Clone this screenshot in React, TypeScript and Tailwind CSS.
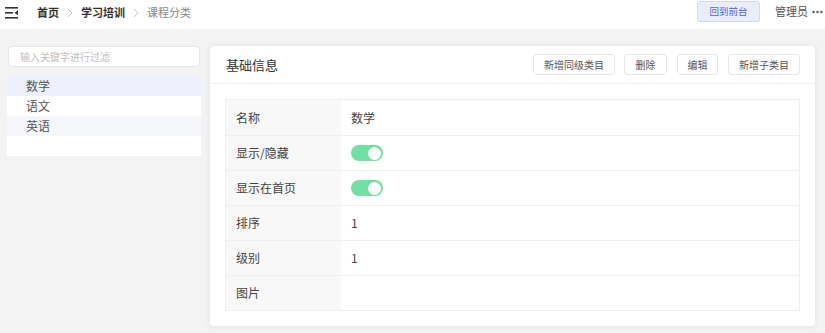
import React from "react";

const font = { fontFamily: '"Noto Sans CJK SC", "Noto Sans", sans-serif' };

function Toggle() {
  return (
    <div className="relative w-[32px] h-[16px] rounded-full bg-[#6fe0a1]">
      <div className="absolute right-[2px] top-[1.5px] w-[13px] h-[13px] rounded-full bg-white" />
    </div>
  );
}

function Chevron() {
  return (
    <svg width="6" height="10" viewBox="0 0 6 10" className="mx-[8px]">
      <path d="M1 1 L5 5 L1 9" fill="none" stroke="#c4c4c4" strokeWidth="1" />
    </svg>
  );
}

export default function App() {
  const rows: { label: string; value: React.ReactNode }[] = [
    { label: "名称", value: "数学" },
    { label: "显示/隐藏", value: <Toggle /> },
    { label: "显示在首页", value: <Toggle /> },
    { label: "排序", value: "1" },
    { label: "级别", value: "1" },
    { label: "图片", value: "" },
  ];
  return (
    <div className="w-[825px] h-[333px] bg-[#f3f3f3] overflow-hidden" style={font}>
      {/* header */}
      <div className="h-[29px] bg-white flex items-center">
        <svg width="14" height="12" viewBox="0 0 14 12" className="ml-[5px] mb-[3px]">
          <rect x="0" y="0" width="13" height="1.6" fill="#333" />
          <rect x="0" y="5" width="8" height="1.6" fill="#333" />
          <path d="M13 3.3 L9.5 5.8 L13 8.3 Z" fill="#333" />
          <rect x="0" y="10" width="13" height="1.6" fill="#333" />
        </svg>
        <div className="flex items-center ml-[18px] mb-[4px] text-[11px]">
          <span className="font-bold text-[#333]">首页</span>
          <Chevron />
          <span className="font-bold text-[#333]">学习培训</span>
          <Chevron />
          <span className="text-[#888]">课程分类</span>
        </div>
        <div className="ml-auto flex items-center self-start pr-[2px]">
          <div className="mt-[1px] w-[63px] h-[21px] rounded-[3px] bg-[#e9edfd] border border-[#cfd7fa] text-[#4b63e6] text-[9.5px] flex items-center justify-center">
            回到前台
          </div>
          <span className="ml-[15px] mt-[1px] text-[11px] text-[#555]">管理员</span>
          <svg width="11" height="4" viewBox="0 0 11 4" className="ml-[4px] mt-[2px]">
            <circle cx="1.5" cy="2" r="1.2" fill="#555" />
            <circle cx="5.5" cy="2" r="1.2" fill="#555" />
            <circle cx="9.5" cy="2" r="1.2" fill="#555" />
          </svg>
        </div>
      </div>

      {/* body */}
      <div className="flex mt-[17px]">
        <div className="ml-[7px] w-[194px]">
          <div className="ml-[1px] w-[192px] h-[21px] bg-white border border-[#e6e6e6] rounded-[3px] flex items-center pl-[11px] text-[10px] text-[#c0c0c0]">
            输入关键字进行过滤
          </div>
          <div className="mt-[9px] bg-white text-[12px] text-[#555]">
            <div className="h-[20px] flex items-center pl-[19px] bg-[#eef0fd]">数学</div>
            <div className="h-[20px] flex items-center pl-[19px]">语文</div>
            <div className="h-[20px] flex items-center pl-[19px] bg-[#f5f6f9]">英语</div>
            <div className="h-[20px]" />
          </div>
        </div>

        <div className="ml-[9px] w-[605px] h-[280px] bg-white rounded-[4px] shadow-[0_0_6px_rgba(0,0,0,0.08)]">
          <div className="h-[38px] border-b border-[#f0f0f0] flex items-center pl-[16px] pr-[15px]">
            <span className="text-[13px] text-[#333]">基础信息</span>
            <div className="ml-auto flex items-center gap-[9px] text-[10px] text-[#555]">
              <div className="w-[82px] h-[21px] border border-[#e6e6e6] rounded-[3px] flex items-center justify-center">新增同级类目</div>
              <div className="w-[43px] h-[21px] border border-[#e6e6e6] rounded-[3px] flex items-center justify-center">删除</div>
              <div className="w-[41px] h-[21px] border border-[#e6e6e6] rounded-[3px] flex items-center justify-center ml-[1px]">编辑</div>
              <div className="w-[72px] h-[21px] border border-[#e6e6e6] rounded-[3px] flex items-center justify-center ml-[1px]">新增子类目</div>
            </div>
          </div>
          <div className="pt-[15px] pl-[15px] pr-[15px]">
            <div className="border border-[#eeeeee] text-[12px]">
              {rows.map((r, i) => (
                <div key={i} className={`flex h-[35px] ${i > 0 ? "border-t border-[#f0f0f0]" : ""}`}>
                  <div className="w-[115px] bg-[#f8f8f8] flex items-center pl-[10px] text-[#444]">{r.label}</div>
                  <div className="flex-1 flex items-center pl-[10px] text-[#444]">{r.value}</div>
                </div>
              ))}
            </div>
          </div>
        </div>
      </div>
    </div>
  );
}
